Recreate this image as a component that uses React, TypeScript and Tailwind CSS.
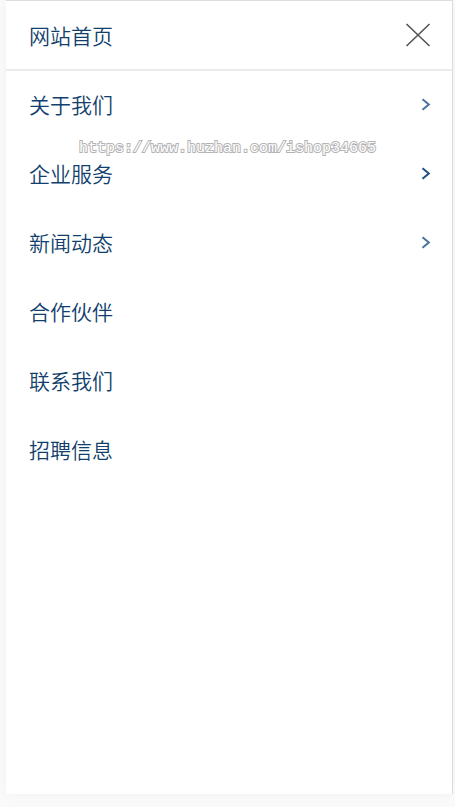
type Item = { label: string; arrow?: string };

const items: Item[] = [
  { label: "关于我们", arrow: "text-[#4a739b]" },
  { label: "企业服务", arrow: "text-[#1f4f80]" },
  { label: "新闻动态", arrow: "text-[#4a739b]" },
  { label: "合作伙伴" },
  { label: "联系我们" },
  { label: "招聘信息" },
];

function Chevron({ className }: { className: string }) {
  return (
    <svg className={className} width="10" height="14" viewBox="0 0 10 14" fill="none" aria-hidden="true">
      <path d="M1.5 2.3 L7.8 7.5 L1.5 12.7" stroke="currentColor" strokeWidth="2" />
    </svg>
  );
}

function CloseIcon() {
  return (
    <svg width="26" height="26" viewBox="0 0 26 26" fill="none" aria-hidden="true">
      <path d="M1.5 2 L24.5 24 M24.5 2 L1.5 24" stroke="#555555" strokeWidth="1.6" />
    </svg>
  );
}

export default function App() {
  return (
    <div className="flex min-h-screen flex-col bg-[#fafafa] pr-0.5 pb-[13px] pl-1.5 font-['Noto_Sans_CJK_SC',sans-serif] text-[21px] leading-8 font-[350] text-[#123f6d]">
      <nav className="relative flex-1 border-t border-r border-t-[#dddddd] border-r-[#dcdcdc] bg-white shadow-[0_0_12px_rgba(0,0,0,0.04)]">
        <div className="flex h-[70px] items-center justify-between border-b-2 border-[#ebebeb] pr-[21px] pl-[23px]">
          <a href="#home">网站首页</a>
          <button type="button" aria-label="关闭">
            <CloseIcon />
          </button>
        </div>
        <ul>
          {items.map((item) => (
            <li key={item.label}>
              <a href={`#${item.label}`} className="flex h-[69px] items-center justify-between pr-[21px] pb-1 pl-[23px]">
                {item.label}
                {item.arrow && <Chevron className={item.arrow} />}
              </a>
            </li>
          ))}
        </ul>
        <span className="pointer-events-none absolute top-[138px] left-[73px] font-['Liberation_Mono',monospace] text-[15px] leading-5 font-normal whitespace-nowrap text-white [-webkit-text-stroke:2px_#b4b4b4] [paint-order:stroke]">
          https://www.huzhan.com/ishop34665
        </span>
      </nav>
    </div>
  );
}
